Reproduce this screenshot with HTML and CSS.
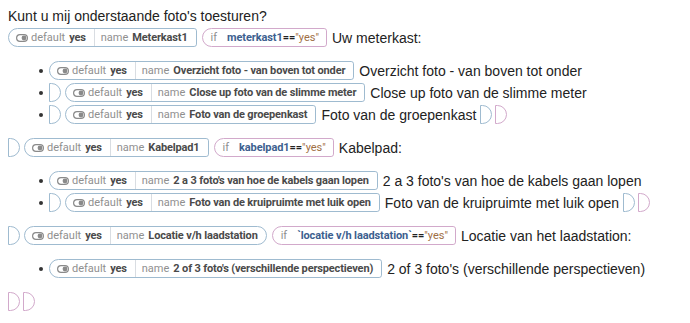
FILE: index.html
```html
<!DOCTYPE html>
<html>
<head>
<meta charset="utf-8">
<link rel="stylesheet" href="styles.css">
</head>
<body>
<div class="doc">
  <p class="line">Kunt u mij onderstaande foto's toesturen?</p>

  <div class="row">
    <span class="chip"><span class="seg"><svg class="tog" width="12" height="8" viewBox="0 0 12 8"><rect x="0.6" y="0.6" width="10.8" height="6.8" rx="3.4" fill="none" stroke="#8a8a8a" stroke-width="1.2"/><circle cx="8" cy="4" r="2.4" fill="#8a8a8a"/></svg><span class="k">default</span><b class="v">yes</b></span><span class="seg"><span class="k">name</span><b class="v">Meterkast1</b></span></span>
    <span class="cond"><span class="k kif">if</span><b class="var">meterkast1</b><b class="op">==</b><span class="str">"yes"</span></span>
    <span class="txt">Uw meterkast:</span>
  </div>

  <ul class="list">
    <li class="row">
      <span class="chip"><span class="seg"><svg class="tog" width="12" height="8" viewBox="0 0 12 8"><rect x="0.6" y="0.6" width="10.8" height="6.8" rx="3.4" fill="none" stroke="#8a8a8a" stroke-width="1.2"/><circle cx="8" cy="4" r="2.4" fill="#8a8a8a"/></svg><span class="k">default</span><b class="v">yes</b></span><span class="seg"><span class="k">name</span><b class="v">Overzicht foto - van boven tot onder</b></span></span>
      <span class="txt">Overzicht foto - van boven tot onder</span>
    </li>
    <li class="row">
      <span class="end blue"></span>
      <span class="chip"><span class="seg"><svg class="tog" width="12" height="8" viewBox="0 0 12 8"><rect x="0.6" y="0.6" width="10.8" height="6.8" rx="3.4" fill="none" stroke="#8a8a8a" stroke-width="1.2"/><circle cx="8" cy="4" r="2.4" fill="#8a8a8a"/></svg><span class="k">default</span><b class="v">yes</b></span><span class="seg"><span class="k">name</span><b class="v">Close up foto van de slimme meter</b></span></span>
      <span class="txt">Close up foto van de slimme meter</span>
    </li>
    <li class="row">
      <span class="end blue"></span>
      <span class="chip"><span class="seg"><svg class="tog" width="12" height="8" viewBox="0 0 12 8"><rect x="0.6" y="0.6" width="10.8" height="6.8" rx="3.4" fill="none" stroke="#8a8a8a" stroke-width="1.2"/><circle cx="8" cy="4" r="2.4" fill="#8a8a8a"/></svg><span class="k">default</span><b class="v">yes</b></span><span class="seg"><span class="k">name</span><b class="v">Foto van de groepenkast</b></span></span>
      <span class="txt tight">Foto van de groepenkast</span>
      <span class="end blue"></span>
      <span class="end pink"></span>
    </li>
  </ul>

  <div class="row">
    <span class="end blue"></span>
    <span class="chip"><span class="seg"><svg class="tog" width="12" height="8" viewBox="0 0 12 8"><rect x="0.6" y="0.6" width="10.8" height="6.8" rx="3.4" fill="none" stroke="#8a8a8a" stroke-width="1.2"/><circle cx="8" cy="4" r="2.4" fill="#8a8a8a"/></svg><span class="k">default</span><b class="v">yes</b></span><span class="seg"><span class="k">name</span><b class="v">Kabelpad1</b></span></span>
    <span class="cond"><span class="k kif">if</span><b class="var">kabelpad1</b><b class="op">==</b><span class="str">"yes"</span></span>
    <span class="txt">Kabelpad:</span>
  </div>

  <ul class="list">
    <li class="row">
      <span class="chip"><span class="seg"><svg class="tog" width="12" height="8" viewBox="0 0 12 8"><rect x="0.6" y="0.6" width="10.8" height="6.8" rx="3.4" fill="none" stroke="#8a8a8a" stroke-width="1.2"/><circle cx="8" cy="4" r="2.4" fill="#8a8a8a"/></svg><span class="k">default</span><b class="v">yes</b></span><span class="seg"><span class="k">name</span><b class="v">2 a 3 foto's van hoe de kabels gaan lopen</b></span></span>
      <span class="txt">2 a 3 foto's van hoe de kabels gaan lopen</span>
    </li>
    <li class="row">
      <span class="end blue"></span>
      <span class="chip"><span class="seg"><svg class="tog" width="12" height="8" viewBox="0 0 12 8"><rect x="0.6" y="0.6" width="10.8" height="6.8" rx="3.4" fill="none" stroke="#8a8a8a" stroke-width="1.2"/><circle cx="8" cy="4" r="2.4" fill="#8a8a8a"/></svg><span class="k">default</span><b class="v">yes</b></span><span class="seg"><span class="k">name</span><b class="v">Foto van de kruipruimte met luik open</b></span></span>
      <span class="txt tight">Foto van de kruipruimte met luik open</span>
      <span class="end blue"></span>
      <span class="end pink"></span>
    </li>
  </ul>

  <div class="row">
    <span class="end blue"></span>
    <span class="chip round"><span class="seg"><svg class="tog" width="12" height="8" viewBox="0 0 12 8"><rect x="0.6" y="0.6" width="10.8" height="6.8" rx="3.4" fill="none" stroke="#8a8a8a" stroke-width="1.2"/><circle cx="8" cy="4" r="2.4" fill="#8a8a8a"/></svg><span class="k">default</span><b class="v">yes</b></span><span class="seg"><span class="k">name</span><b class="v">Locatie v/h laadstation</b></span></span>
    <span class="cond"><span class="k kif">if</span><b class="var">`locatie v/h laadstation`</b><b class="op">==</b><span class="str">"yes"</span></span>
    <span class="txt">Locatie van het laadstation:</span>
  </div>

  <ul class="list">
    <li class="row">
      <span class="chip"><span class="seg"><svg class="tog" width="12" height="8" viewBox="0 0 12 8"><rect x="0.6" y="0.6" width="10.8" height="6.8" rx="3.4" fill="none" stroke="#8a8a8a" stroke-width="1.2"/><circle cx="8" cy="4" r="2.4" fill="#8a8a8a"/></svg><span class="k">default</span><b class="v">yes</b></span><span class="seg"><span class="k">name</span><b class="v">2 of 3 foto's (verschillende perspectieven)</b></span></span>
      <span class="txt">2 of 3 foto's (verschillende perspectieven)</span>
    </li>
  </ul>

  <div class="row closing">
    <span class="end pink"></span>
    <span class="end pink"></span>
  </div>
</div>
</body>
</html>
```

FILE: styles.css
```css
html, body {
  margin: 0;
  padding: 0;
  background: #fff;
}
.doc {
  padding: 8px 8px 0 8px;
  font-family: "Liberation Sans", Arial, sans-serif;
  font-size: 14px;
  color: #222;
}
.line {
  margin: 0;
  height: 20px;
  line-height: 17px;
}
.row {
  display: flex;
  align-items: center;
  height: 19px;
  margin-bottom: 2px;
}
.list {
  list-style: none;
  margin: 14px 0 14px 0;
  padding: 0 0 0 41px;
}
.list .row {
  position: relative;
  margin-bottom: 3px;
}
.list .row:last-child {
  margin-bottom: 0;
}
.list .row::before {
  content: "";
  position: absolute;
  left: -10px;
  top: 8px;
  width: 4px;
  height: 4px;
  border-radius: 50%;
  background: #333;
}
.chip {
  display: inline-flex;
  align-items: center;
  height: 19px;
  box-sizing: border-box;
  border: 1px solid #9fbbd0;
  border-radius: 10px 3px 3px 10px;
  padding: 0 8px 0 7px;
  font-family: Roboto, "Noto Sans", sans-serif;
  font-size: 11px;
  white-space: nowrap;
  background: #fff;
}
.chip.round {
  border-radius: 10px;
}
.seg {
  display: inline-flex;
  align-items: center;
  height: 100%;
}
.seg + .seg {
  border-left: 1px solid #d9dde2;
  margin-left: 8px;
  padding-left: 6px;
}
.tog {
  margin-right: 3px;
}
.k {
  color: #8f8f8f;
  margin-right: 4px;
}
.v {
  color: #4a4a4a;
  font-weight: 700;
  letter-spacing: -0.15px;
}
.cond {
  display: inline-flex;
  align-items: center;
  height: 19px;
  box-sizing: border-box;
  border: 1px solid #d2a9cb;
  border-radius: 10px 3px 3px 10px;
  padding: 0 7px 0 8px;
  margin-left: 5px;
  font-family: Roboto, "Noto Sans", sans-serif;
  font-size: 11px;
  white-space: nowrap;
}
.kif {
  margin-right: 10px;
}
.var {
  color: #3d5f8f;
  font-weight: 700;
  letter-spacing: -0.1px;
}
.op {
  color: #222;
  font-weight: 700;
}
.str {
  color: #a06f45;
}
.txt {
  margin-left: 5px;
  white-space: nowrap;
}
.txt.tight {
  margin-right: 4px;
}
.end {
  display: inline-block;
  width: 12px;
  height: 19px;
  box-sizing: border-box;
  border: 1px solid #9fbbd0;
  border-radius: 0 10px 10px 0;
  margin-right: 3px;
}
.end.pink {
  border-color: #d2a9cb;
}
.row .end + .chip {
  margin-left: 1px;
}
```
